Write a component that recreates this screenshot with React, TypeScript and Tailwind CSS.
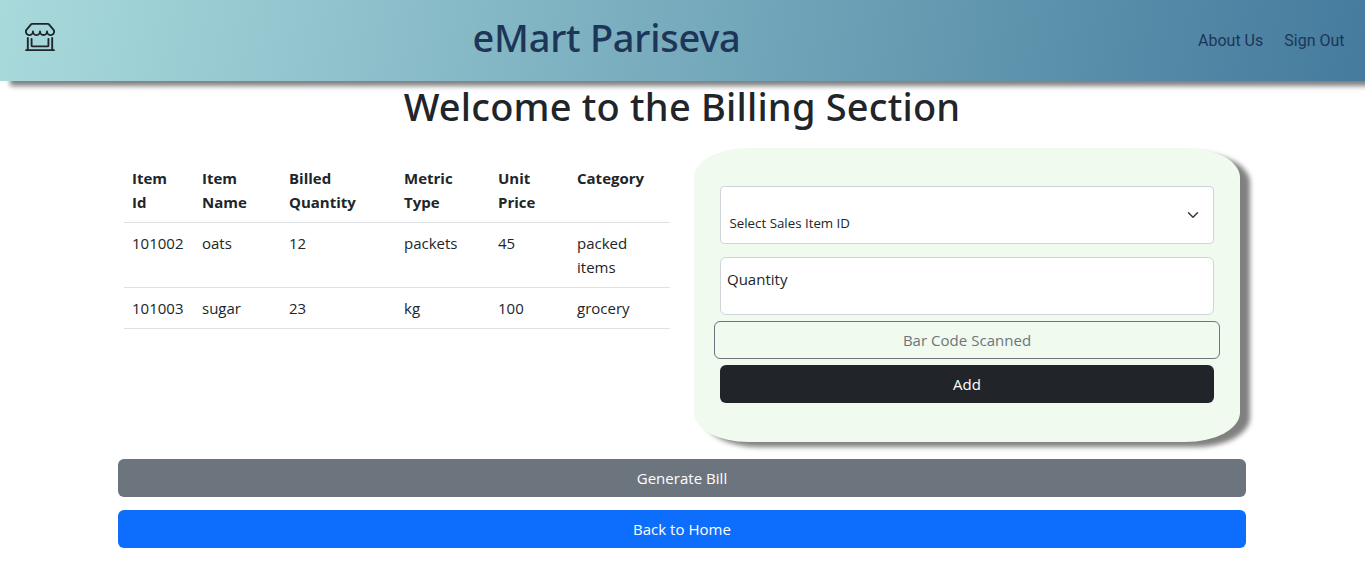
import type { ReactNode } from "react";
import { BsShopWindow } from "react-icons/bs";

const columns = [
  { label: "Item Id", width: "w-[70px]" },
  { label: "Item Name", width: "w-[87px]" },
  { label: "Billed Quantity", width: "w-[115px]" },
  { label: "Metric Type", width: "w-[94px]" },
  { label: "Unit Price", width: "w-[79px]" },
  { label: "Category", width: "w-[101px]" },
];

const rows = [
  ["101002", "oats", "12", "packets", "45", "packed items"],
  ["101003", "sugar", "23", "kg", "100", "grocery"],
];

function Header() {
  return (
    <header className="relative flex h-[81px] items-center bg-[linear-gradient(100deg,#a8dadc,#457b9d)] pr-[20.5px] pl-[25px] shadow-[10px_5px_5px_#808080]">
      <BsShopWindow size={30} className="-mt-2.5" />
      <h1 className="mr-auto mb-2 ml-[417.5px] text-[38px] leading-[48px] font-medium tracking-[-0.25px] text-[#1d3557] font-['Noto_Sans',sans-serif]">
        eMart Pariseva
      </h1>
      <nav className="flex gap-[21px] text-base text-[#1d3557] font-['Roboto',sans-serif]">
        <a href="#about">About Us</a>
        <a href="#signout">Sign Out</a>
      </nav>
    </header>
  );
}

function BillTable() {
  return (
    <table className="mt-[10px] w-[546px] table-fixed border-collapse self-start text-left">
      <thead>
        <tr className="border-b border-[#dee2e6] align-top">
          {columns.map((c) => (
            <th key={c.label} className={`${c.width} p-2 font-bold`}>
              <span className="block w-min">{c.label}</span>
            </th>
          ))}
        </tr>
      </thead>
      <tbody>
        {rows.map((row) => (
          <tr key={row[0]} className="border-b border-[#dee2e6] align-top">
            {row.map((cell, i) => (
              <td key={columns[i].label} className="p-2">
                {cell}
              </td>
            ))}
          </tr>
        ))}
      </tbody>
    </table>
  );
}

function WideButton({ className, children }: { className: string; children: ReactNode }) {
  return (
    <button type="button" className={`flex h-[38px] items-center justify-center rounded-md tracking-[0.03px] ${className}`}>
      {children}
    </button>
  );
}

function BillForm() {
  return (
    <form className="flex h-[294px] w-[546px] flex-col rounded-[10%] bg-[#f0faee] px-5 pt-[38px] shadow-[10px_5px_5px_#808080]">
      <div className="mx-1.5 flex h-[58px] items-center justify-between rounded border border-[#ced4da] bg-white pr-3 pl-[8.5px]">
        <span className="pt-[15px] text-[13.3px]">Select Sales Item ID</span>
        <svg viewBox="0 0 16 16" className="mr-0.5 size-3" fill="none" stroke="#343a40" strokeWidth="2" strokeLinecap="round" strokeLinejoin="round">
          <path d="m2 5 6 6 6-6" />
        </svg>
      </div>
      <div className="mx-1.5 mt-[13px] h-[58px] rounded-md border border-[#ced4da] bg-white px-[6px] pt-[9px]">Quantity</div>
      <WideButton className="mt-1.5 border border-[#6c757d] text-[#6c757d]">Bar Code Scanned</WideButton>
      <WideButton className="mx-1.5 mt-1.5 bg-[#212529] text-white">Add</WideButton>
    </form>
  );
}

export default function App() {
  return (
    <div className="h-[564px] overflow-hidden bg-white text-[15px] leading-6 text-[#212529] font-['Open_Sans',sans-serif]">
      <Header />
      <main className="ml-[118px] flex w-[1128px] flex-col">
        <h2 className="h-[67px] text-center text-[38px] leading-[50px] font-medium tracking-[0.2px] font-['Noto_Sans',sans-serif]">
          Welcome to the Billing Section
        </h2>
        <div className="flex justify-between px-1.5">
          <BillTable />
          <BillForm />
        </div>
        <WideButton className="mt-[17px] bg-[#6c757d] text-white">Generate Bill</WideButton>
        <WideButton className="mt-[13px] bg-[#0d6efd] text-white">Back to Home</WideButton>
      </main>
    </div>
  );
}
